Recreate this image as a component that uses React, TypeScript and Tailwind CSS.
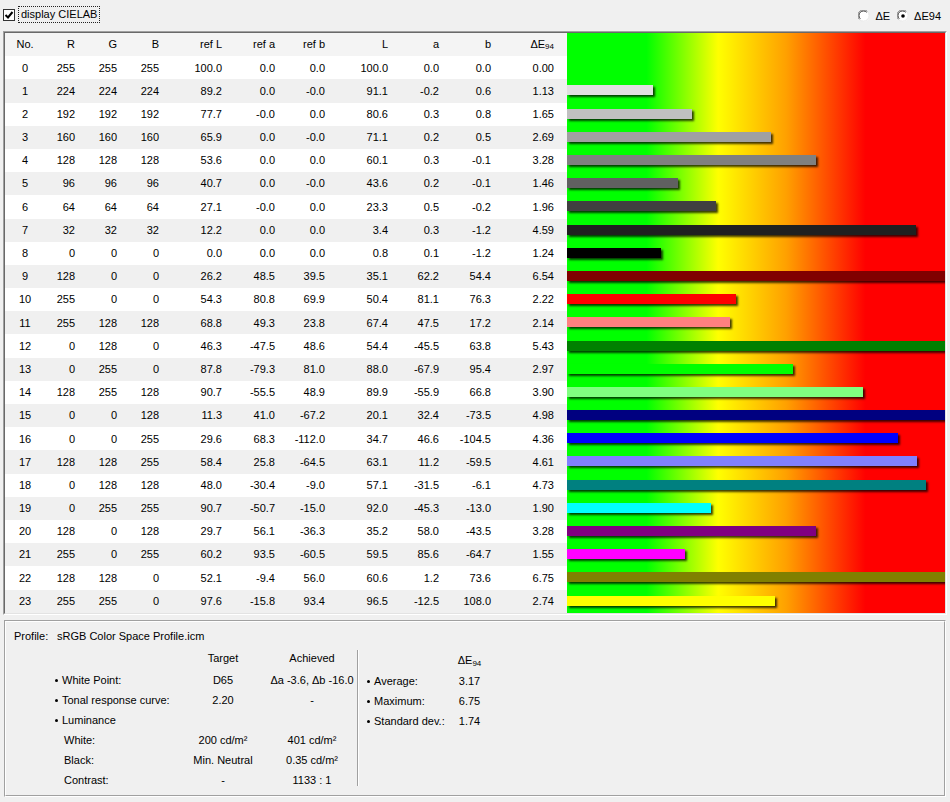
type Row = [number, number, number, number, string, string, string, string, string, string, string];

const rows: Row[] = [
  [0, 255, 255, 255, "100.0", "0.0", "0.0", "100.0", "0.0", "0.0", "0.00"],
  [1, 224, 224, 224, "89.2", "0.0", "-0.0", "91.1", "-0.2", "0.6", "1.13"],
  [2, 192, 192, 192, "77.7", "-0.0", "0.0", "80.6", "0.3", "0.8", "1.65"],
  [3, 160, 160, 160, "65.9", "0.0", "-0.0", "71.1", "0.2", "0.5", "2.69"],
  [4, 128, 128, 128, "53.6", "0.0", "0.0", "60.1", "0.3", "-0.1", "3.28"],
  [5, 96, 96, 96, "40.7", "0.0", "-0.0", "43.6", "0.2", "-0.1", "1.46"],
  [6, 64, 64, 64, "27.1", "-0.0", "0.0", "23.3", "0.5", "-0.2", "1.96"],
  [7, 32, 32, 32, "12.2", "0.0", "0.0", "3.4", "0.3", "-1.2", "4.59"],
  [8, 0, 0, 0, "0.0", "0.0", "0.0", "0.8", "0.1", "-1.2", "1.24"],
  [9, 128, 0, 0, "26.2", "48.5", "39.5", "35.1", "62.2", "54.4", "6.54"],
  [10, 255, 0, 0, "54.3", "80.8", "69.9", "50.4", "81.1", "76.3", "2.22"],
  [11, 255, 128, 128, "68.8", "49.3", "23.8", "67.4", "47.5", "17.2", "2.14"],
  [12, 0, 128, 0, "46.3", "-47.5", "48.6", "54.4", "-45.5", "63.8", "5.43"],
  [13, 0, 255, 0, "87.8", "-79.3", "81.0", "88.0", "-67.9", "95.4", "2.97"],
  [14, 128, 255, 128, "90.7", "-55.5", "48.9", "89.9", "-55.9", "66.8", "3.90"],
  [15, 0, 0, 128, "11.3", "41.0", "-67.2", "20.1", "32.4", "-73.5", "4.98"],
  [16, 0, 0, 255, "29.6", "68.3", "-112.0", "34.7", "46.6", "-104.5", "4.36"],
  [17, 128, 128, 255, "58.4", "25.8", "-64.5", "63.1", "11.2", "-59.5", "4.61"],
  [18, 0, 128, 128, "48.0", "-30.4", "-9.0", "57.1", "-31.5", "-6.1", "4.73"],
  [19, 0, 255, 255, "90.7", "-50.7", "-15.0", "92.0", "-45.3", "-13.0", "1.90"],
  [20, 128, 0, 128, "29.7", "56.1", "-36.3", "35.2", "58.0", "-43.5", "3.28"],
  [21, 255, 0, 255, "60.2", "93.5", "-60.5", "59.5", "85.6", "-64.7", "1.55"],
  [22, 128, 128, 0, "52.1", "-9.4", "56.0", "60.6", "1.2", "73.6", "6.75"],
  [23, 255, 255, 0, "97.6", "-15.8", "93.4", "96.5", "-12.5", "108.0", "2.74"],
];

// column widths, matched to the screenshot
const colW = [
  "w-[40px] justify-center",
  "w-[35px] justify-end pr-[5px]",
  "w-[42px] justify-end pr-[5px]",
  "w-[42px] justify-end pr-[5px]",
  "w-[63px] justify-end pr-[5px]",
  "w-[53px] justify-end pr-[5px]",
  "w-[50px] justify-end pr-[5px]",
  "w-[63px] justify-end pr-[5px]",
  "w-[51px] justify-end pr-[5px]",
  "w-[52px] justify-end pr-[5px]",
  "w-[63px] justify-end pr-[5px]",
];

const Sub94 = () => (
  <>
    ΔE<sub className="text-[8px]">94</sub>
  </>
);

const headers: React.ReactNode[] = ["No.", "R", "G", "B", "ref L", "ref a", "ref b", "L", "a", "b", <Sub94 key="de" />];

function Radio({ checked }: { checked?: boolean }) {
  return (
    <svg width="12" height="12" viewBox="0 0 12 12">
      <circle cx="6" cy="6" r="5.5" fill="#fff" />
      <path d="M1.5 9.5 A5.5 5.5 0 0 1 9.5 1.5" fill="none" stroke="#808080" strokeWidth="1" />
      <path d="M2.3 8.7 A4.5 4.5 0 0 1 8.7 2.3" fill="none" stroke="#404040" strokeWidth="1" />
      <path d="M9.5 1.5 A5.5 5.5 0 0 1 1.5 9.5" fill="none" stroke="#e6e6e6" strokeWidth="1" />
      {checked && <circle cx="6" cy="6" r="1.8" fill="#000" />}
    </svg>
  );
}

function Bullet() {
  return <span className="inline-block w-[3px] h-[3px] rounded-full bg-black mr-[4px] mb-[1px]" />;
}

export default function App() {
  return (
    <div className="w-[950px] h-[802px] bg-[#f0f0f0] text-black text-[11px] font-['Liberation_Sans',Arial,sans-serif] overflow-hidden">
      {/* top bar */}
      <div className="h-[31px] flex items-start pt-[6px]">
        <div className="ml-[3px] mt-[3px] w-[12px] h-[12px] border border-[#333] bg-white flex items-center justify-center">
          <svg width="10" height="10" viewBox="0 0 10 10">
            <path d="M1.5 5 L4 7.5 L8.5 2" fill="none" stroke="#000" strokeWidth="2" />
          </svg>
        </div>
        <div className="ml-[3px] h-[17px] border border-dotted border-[#222] px-[2px] flex items-center">display CIELAB</div>
        <div className="ml-auto mr-[9px] mt-[2px] flex items-center">
          <Radio />
          <span className="ml-[5px]">ΔE</span>
          <span className="ml-[7px]" />
          <Radio checked />
          <span className="ml-[5px]">ΔE94</span>
        </div>
      </div>

      {/* table frame */}
      <div className="ml-[3px] w-[944px] border-t border-l border-[#a0a0a0] border-r-white border-b-white border-r border-b">
        <div className="border-t border-l border-[#696969] border-r-[#e3e3e3] border-b-[#e3e3e3] border-r border-b flex bg-white">
          <div className="w-[562px]">
            <div className="h-[23.2px] flex bg-[#f4f4f4]">
              {headers.map((h, i) => (
                <div key={i} className={`flex items-center ${colW[i]}`}>
                  {h}
                </div>
              ))}
            </div>
            {rows.map((r, ri) => (
              <div key={ri} className={`h-[23.2px] flex ${ri % 2 === 1 ? "bg-[#f0f0f0]" : "bg-white"}`}>
                {r.map((v, i) => (
                  <div key={i} className={`flex items-center ${colW[i]}`}>
                    {v}
                  </div>
                ))}
              </div>
            ))}
          </div>
          <div className="w-[378px] overflow-hidden bg-[linear-gradient(to_right,#00ff00_21%,#ffff00_40%,#ffa000_58%,#ff0000_79%)]">
            <div className="h-[23.2px]" />
            {rows.map((r, ri) => {
              const w = Math.min(378, Math.round(parseFloat(r[10]) * 76));
              return (
                <div key={ri} className="h-[23.2px] flex items-center">
                  {w > 0 && (
                    <div
                      className="h-[10px] -mt-[1px] shadow-[2px_2px_2px_rgba(0,0,0,0.75)]"
                      style={{ width: w, backgroundColor: `rgb(${r[1]},${r[2]},${r[3]})` }}
                    />
                  )}
                </div>
              );
            })}
          </div>
        </div>
      </div>

      {/* summary panel */}
      <div className="mt-[5px] ml-[4px] w-[942px] h-[177px] border-t border-l border-[#a0a0a0] border-r border-b border-r-white border-b-white">
        <div className="h-full border-t border-l border-white border-r border-b border-r-[#a0a0a0] border-b-[#a0a0a0] pt-[5px] pl-[8px]">
          <div className="h-[20px] flex items-center">
            <span className="w-[43px]">Profile:</span>
            <span>sRGB Color Space Profile.icm</span>
          </div>
          <div className="flex mt-[1px]">
            <div className="w-[342px]">
              <div className="h-[22px] grid grid-cols-[164px_90px_88px] items-center">
                <span />
                <span className="text-center">Target</span>
                <span className="text-center">Achieved</span>
              </div>
              <div className="mt-[1px] h-[20px] grid grid-cols-[164px_90px_88px] items-center">
                <span className="pl-[41px] flex items-center"><Bullet />White Point:</span>
                <span className="text-center">D65</span>
                <span className="text-center">Δa -3.6, Δb -16.0</span>
              </div>
              <div className="h-[20px] grid grid-cols-[164px_90px_88px] items-center">
                <span className="pl-[41px] flex items-center"><Bullet />Tonal response curve:</span>
                <span className="text-center">2.20</span>
                <span className="text-center">-</span>
              </div>
              <div className="h-[20px] grid grid-cols-[164px_90px_88px] items-center">
                <span className="pl-[41px] flex items-center"><Bullet />Luminance</span>
              </div>
              <div className="h-[20px] grid grid-cols-[164px_90px_88px] items-center">
                <span className="pl-[50px]">White:</span>
                <span className="text-center">200 cd/m²</span>
                <span className="text-center">401 cd/m²</span>
              </div>
              <div className="h-[20px] grid grid-cols-[164px_90px_88px] items-center">
                <span className="pl-[50px]">Black:</span>
                <span className="text-center">Min. Neutral</span>
                <span className="text-center">0.35 cd/m²</span>
              </div>
              <div className="h-[20px] grid grid-cols-[164px_90px_88px] items-center">
                <span className="pl-[50px]">Contrast:</span>
                <span className="text-center">-</span>
                <span className="text-center">1133 : 1</span>
              </div>
            </div>
            <div className="ml-[1px] mt-[2px] h-[136px] w-[2px] border-l border-[#a0a0a0] border-r border-r-white" />
            <div className="pl-[8px] pt-[2px]">
              <div className="h-[22px] grid grid-cols-[80px_45px] items-center">
                <span />
                <span className="text-center"><Sub94 /></span>
              </div>
              <div className="h-[20px] grid grid-cols-[80px_45px] items-center">
                <span className="flex items-center"><Bullet />Average:</span>
                <span className="text-center">3.17</span>
              </div>
              <div className="h-[20px] grid grid-cols-[80px_45px] items-center">
                <span className="flex items-center"><Bullet />Maximum:</span>
                <span className="text-center">6.75</span>
              </div>
              <div className="h-[20px] grid grid-cols-[80px_45px] items-center">
                <span className="flex items-center whitespace-nowrap"><Bullet />Standard dev.:</span>
                <span className="text-center">1.74</span>
              </div>
            </div>
          </div>
        </div>
      </div>
    </div>
  );
}
